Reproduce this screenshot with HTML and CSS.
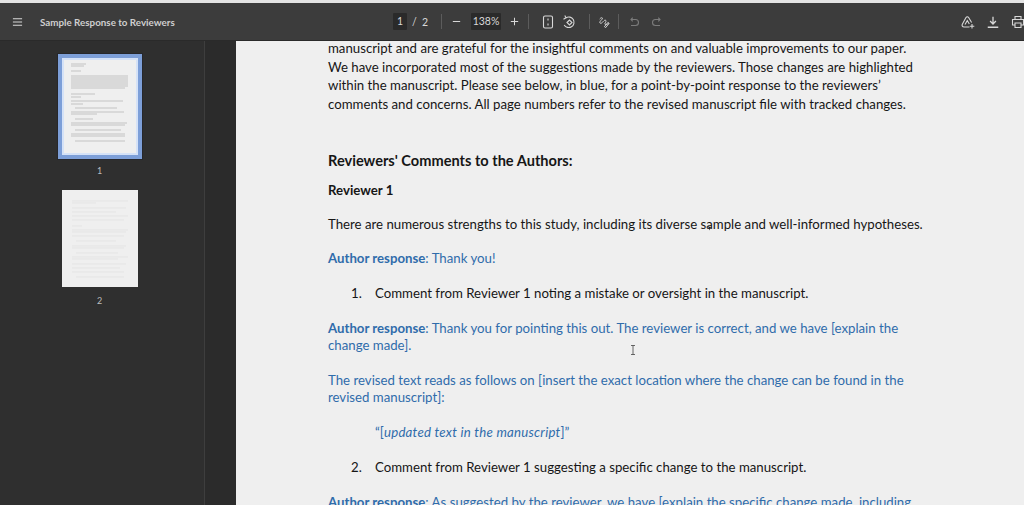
FILE: index.html
```html
<!DOCTYPE html>
<html lang="en">

<head>
    <meta charset="UTF-8">
    <title>Sample Response to Reviewers</title>
    <link rel="stylesheet" href="styles.css">
</head>

<body>
    <header class="toolbar">
        <div class="tool-left">
            <svg class="icon menu-icon" viewBox="0 0 12 10"><path d="M1 1.500h10M1 5h10M1 8.500h10" /></svg>
            <span class="doc-title">Sample Response to Reviewers</span>
        </div>
        <div class="tool-center">
            <span class="num-box page-box">1</span>
            <span class="page-total">/ &nbsp;2</span>
            <i class="divider first-div"></i>
            <svg class="icon minus" viewBox="0 0 12 12"><path d="M2 6h8" /></svg>
            <span class="num-box zoom-box">138%</span>
            <svg class="icon plus" viewBox="0 0 12 12"><path d="M2 6h8M6 2v8" /></svg>
            <i class="divider plus-div"></i>
            <svg class="icon fit" viewBox="0 0 12 14"><rect x="1.500" y="1" width="9" height="12" rx="1.500" /><path d="M6 3.500v2M6 8.500v2" /></svg>
            <svg class="icon rotate" viewBox="0 0 14 14"><path d="M4 2.700A5.300 5.300 0 1 1 2.200 10" /><path d="M1.500 4.200L4 2.700 2.800.600" /><path d="M5 7.500l2.500-2.500L10 7.500 7.500 10z" /></svg>
            <i class="divider rotate-div"></i>
            <svg class="icon draw" viewBox="0 0 14 14"><path d="M2 3.500c2-2.500 4.500-1.500 2.500.5S1 8 3 8.500s4.500-5 6-3.500-2.500 4.500-.5 5 3-1.500 4-1" /><path d="M7.500 12.500l4-5 1.500 1-4 5z" /></svg>
            <i class="divider draw-div"></i>
            <svg class="icon muted undo" viewBox="0 0 12 12"><path d="M3 9.500h4.500a2.500 2.500 0 0 0 0-6H3M4.700 1.700L3 3.500l1.700 1.800" /></svg>
            <svg class="icon muted redo" viewBox="0 0 12 12"><path d="M9 9.500H4.500a2.500 2.500 0 0 1 0-6H9M7.300 1.700L9 3.500 7.300 5.300" /></svg>
        </div>
        <div class="tool-right">
            <svg class="icon cloud" viewBox="0 0 14 14"><path d="M5 2.500c.6-1 2-1 2.600 0l3 5M8.500 12H3c-1.500 0-2.400-1.400-1.700-2.700L5 2.500M4 9.500L6.300 5.500l2 3.500" /><path class="plus-mark" d="M11 9v4.500M8.800 11.200h4.500" /></svg>
            <svg class="icon save" viewBox="0 0 12 12"><path d="M6 1.500v6M3.500 5.200L6 7.700l2.500-2.500M1.500 10.500h9" /></svg>
            <svg class="icon print" viewBox="0 0 14 14"><path d="M4 4.500V1.500h6v3M4 10H1.500V4.500h11V10H10M4 8h6v4.500H4z" /></svg>
        </div>
    </header>

    <div class="viewer">
        <aside class="sidebar">
            <div class="thumb thumb-active">
                <svg class="thumb-page" viewBox="0 0 76 97">
                    <g class="bars-dark">
                        <path d="M9 6h15M9 8h13M9 13h10" />
                        <path d="M9 18h57M9 20h57M9 22h57M9 24h57M9 26h57M9 28h57M9 30h54" />
                        <path d="M9 36h24M9 39h10M9 43h52M9 46h12" />
                        <path d="M13 50h42M9 54h53M9 56h26" />
                        <path d="M13 61h18M9 65h56M9 67h54" />
                        <path d="M13 72h46M9 76h54M9 78h54M13 83h50" />
                    </g>
                </svg>
                <span class="thumb-num">1</span>
            </div>
            <div class="thumb thumb-next">
                <svg class="thumb-page" viewBox="0 0 76 97">
                    <g class="bars-light">
                        <path d="M10 11h56M10 13h24M10 18h54M10 22h44M10 26h56M10 30h52" />
                        <path d="M10 36h10M10 40h56M10 42h54M10 46h52M14 51h40M10 56h54M10 58h52" />
                        <path d="M14 63h42M10 67h56M10 69h46M10 74h54M10 78h48M10 82h52M14 87h48" />
                    </g>
                </svg>
                <span class="thumb-num">2</span>
            </div>
        </aside>

        <main class="pane">
            <article class="page">
                <p class="intro">manuscript and are grateful for the insightful comments on and valuable improvements to our paper.<br>
                    We have incorporated most of the suggestions made by the reviewers. Those changes are highlighted<br>
                    within the manuscript. Please see below, in blue, for a point-by-point response to the reviewers’<br>
                    comments and concerns. All page numbers refer to the revised manuscript file with tracked changes.</p>
                <h2>Reviewers' Comments to the Authors:</h2>
                <h3>Reviewer 1</h3>
                <p>There are numerous strengths to this study, including its diverse sample and well-informed hypotheses.</p>
                <p class="reply"><b>Author response</b>: Thank you!</p>
                <p class="item"><span class="item-num">1.</span>Comment from Reviewer 1 noting a mistake or oversight in the manuscript.</p>
                <p class="reply"><b>Author response</b>: Thank you for pointing this out. The reviewer is correct, and we have [explain the<br>change made].</p>
                <p class="reply">The revised text reads as follows on [insert the exact location where the change can be found in the<br>revised manuscript]:</p>
                <p class="reply quote">“[<em>updated text in the manuscript</em>]”</p>
                <p class="item"><span class="item-num">2.</span>Comment from Reviewer 1 suggesting a specific change to the manuscript.</p>
                <p class="reply"><b>Author response</b>: As suggested by the reviewer, we have [explain the specific change made, including</p>
            </article>
            <svg class="cursor-ibeam" viewBox="0 0 6 10"><path d="M1 .500h4M3 .500v9M1 9.500h4" /></svg>
            <svg class="cursor-arrow" viewBox="0 0 6 6"><path d="M1 1l4 2-2 .500-.500 2z" /></svg>
        </main>
    </div>
</body>

</html>
```

FILE: styles.css
```css
html,
body {
    height: 100%;
}

body {
    margin: 0;
    overflow: hidden;
    display: flex;
    flex-direction: column;
    font-family: "Lato", "Open Sans", sans-serif;
    background: #2b2b2b;
    border-top: 3px solid #e4e4e4;
    box-sizing: border-box;
}

/* Toolbar */
.toolbar {
    height: 38px;
    flex: none;
    display: flex;
    align-items: center;
    background: #3c3c3c;
    color: #d8d8d8;
    border-bottom: 1px solid #2a2a2a;
    box-sizing: border-box;
}

.icon {
    flex: none;
    width: 14px;
    height: 14px;
    fill: none;
    stroke: #d8d8d8;
    stroke-width: 1.1;
}

.icon.muted {
    stroke: #7b7b7b;
    width: 12px;
    height: 12px;
}

.tool-left {
    width: 391px;
    flex: none;
    display: flex;
    align-items: center;
    padding-left: 12px;
    box-sizing: border-box;
}

.menu-icon {
    width: 11px;
    height: 10px;
    margin-right: 17px;
}

.doc-title {
    font-size: 9.800px;
    font-weight: 700;
    color: #cfcfcf;
}

.tool-center {
    display: flex;
    align-items: center;
    flex: 1;
    font-size: 10.500px;
}

.num-box {
    background: #2a2a2a;
    height: 17px;
    line-height: 17px;
    text-align: center;
    border-radius: 1px;
}

.page-box {
    width: 14px;
    margin-left: 2px;
}

.page-total {
    margin-left: 5px;
    width: 27px;
}

.divider {
    width: 1px;
    height: 15px;
    background: #5c5c5c;
    flex: none;
}

.first-div {
    margin-left: 2px;
}

.minus {
    width: 11px;
    height: 11px;
    margin-left: 9px;
}

.zoom-box {
    width: 30px;
    margin-left: 9px;
}

.plus {
    width: 11px;
    height: 11px;
    margin-left: 8px;
}

.plus-div {
    margin-left: 8px;
}

.fit {
    width: 12px;
    height: 14px;
    margin-left: 13px;
}

.rotate {
    margin-left: 8px;
}

.rotate-div {
    margin-left: 13px;
}

.draw {
    width: 12px;
    height: 12px;
    margin-left: 8px;
}

.draw-div {
    margin-left: 8px;
}

.undo {
    margin-left: 9px;
}

.redo {
    margin-left: 11px;
}

.tool-right {
    display: flex;
    align-items: center;
    gap: 11px;
    margin-right: -1px;
}

/* Viewer */
.viewer {
    flex: 1;
    display: flex;
    min-height: 0;
}

.sidebar {
    width: 205px;
    flex: none;
    background: #2f2f2f;
    border-right: 1px solid #3e3e3e;
    box-sizing: border-box;
    display: flex;
    flex-direction: column;
    align-items: center;
    padding: 13px 5px 0 0;
}

.thumb {
    display: flex;
    flex-direction: column;
    align-items: center;
    margin-bottom: 14px;
}

.thumb-page {
    display: block;
    width: 76px;
    height: 97px;
    background: #efefef;
}

.thumb-active .thumb-page {
    box-sizing: content-box;
    border: 4px solid #7d9fd8;
    outline: 1px solid #26272b;
    width: 76px;
    height: 97px;
    box-shadow: inset 0 0 0 2px #d5e2f7;
}

.thumb-num {
    font-size: 9px;
    color: #bcbcbc;
    margin-top: 6px;
    line-height: 11px;
}

.thumb-next .thumb-num {
    margin-top: 8px;
}

.bars-dark {
    fill: none;
    stroke: #969696;
    stroke-width: 0.5;
}

.bars-light {
    fill: none;
    stroke: #dcdcdc;
    stroke-width: 0.6;
}

.pane {
    flex: 1;
    min-width: 0;
    position: relative;
    overflow: hidden;
    background: #2b2b2b;
    padding-left: 31px;
}

.page {
    background: #efefef;
    height: 100%;
    box-sizing: border-box;
    padding: 0 0 0 92px;
    color: #161616;
    font-size: 13.220px;
    line-height: 17.500px;
    white-space: nowrap;
    overflow: hidden;
}

.page p {
    margin: 0 0 17.200px;
}

.page .intro {
    margin: -2px 0 37px;
    line-height: 18.670px;
}

.page h2 {
    margin: 0 0 10px;
    font-size: 14.580px;
    font-weight: 700;
    line-height: 20px;
}

.page h3 {
    margin: 0 0 17px;
    font-size: 13.220px;
    font-weight: 700;
    line-height: 18px;
}

.page .reply {
    color: #2f6cab;
}

.reply b {
    font-weight: 700;
}

.page .item {
    color: #161616;
    padding-left: 23px;
}

.item-num {
    display: inline-block;
    width: 24px;
}

.page .quote {
    padding-left: 47px;
}

.quote em {
    letter-spacing: 0.25px;
}

/* Mouse pointers caught in the capture */
.cursor-ibeam {
    position: absolute;
    left: 425px;
    top: 304px;
    width: 6px;
    height: 10px;
    fill: none;
    stroke: #444;
    stroke-width: 0.8;
}

.cursor-arrow {
    position: absolute;
    left: 502px;
    top: 184px;
    width: 6px;
    height: 6px;
    fill: #222;
}
```
